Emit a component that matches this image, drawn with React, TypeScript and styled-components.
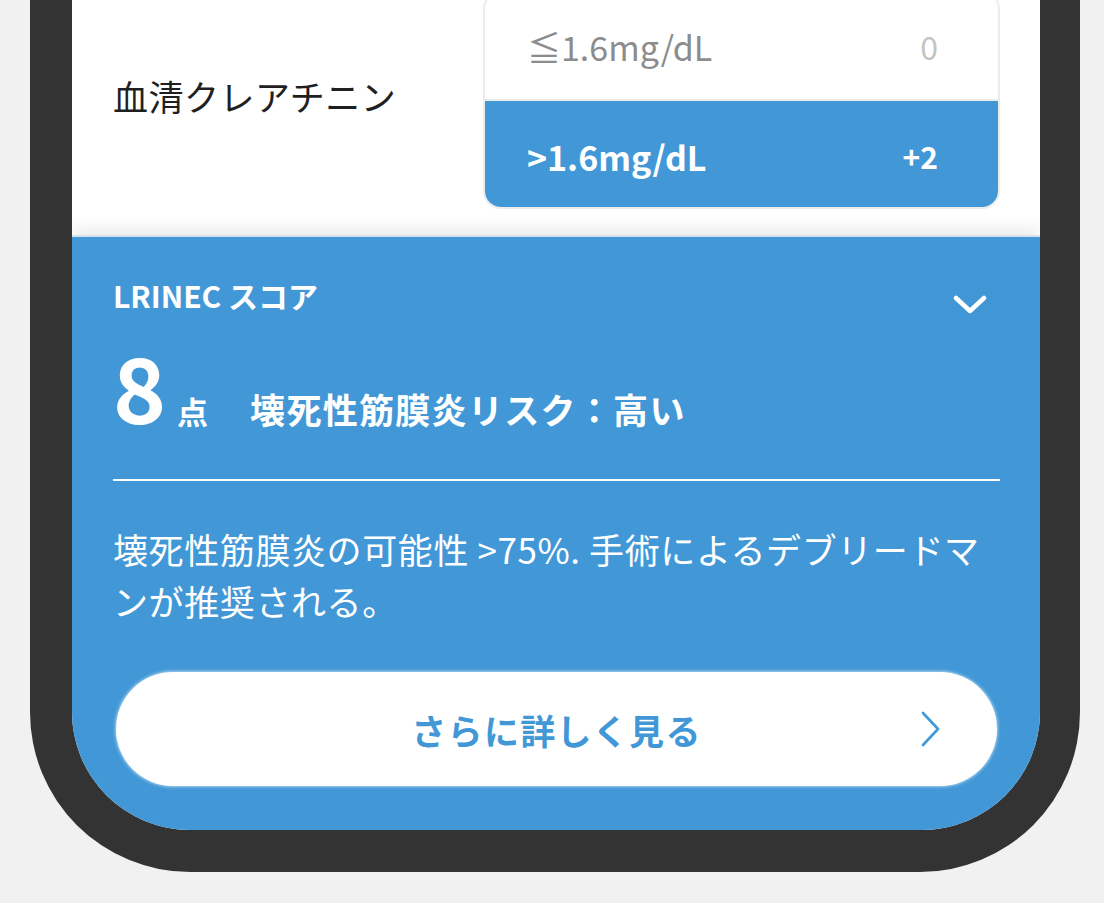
import styled, { createGlobalStyle } from "styled-components";

// ── GLOBAL ─────────────────────────────────

const GlobalStyle = createGlobalStyle`
  html, body {
    margin: 0;
    padding: 0;
    background: #f1f1f1;
    overflow: hidden;
  }
  body {
    font-family: "Noto Sans CJK JP", "Noto Sans", sans-serif;
  }
`;

const BLUE = "#4298d7";

// ── FRAME ──────────────────────────────────

const Page = styled.div`
  width: 1104px;
  height: 903px;
  padding-left: 30px;
  box-sizing: border-box;
`;

const PhoneFrame = styled.div`
  width: 1050px;
  margin-top: -24px;
  padding: 0 40px 42px 42px;
  box-sizing: border-box;
  background: #333333;
  border-radius: 0 0 160px 160px;
`;

const Screen = styled.div`
  background: #ffffff;
  border-radius: 0 0 118px 118px;
  overflow: hidden;
  display: flex;
  flex-direction: column;
`;

// ── CRITERIA ROW ───────────────────────────

const CriteriaRow = styled.div`
  display: flex;
  align-items: center;
  justify-content: space-between;
  padding: 15px 40px 26px 41px;
`;

const CriteriaLabel = styled.div`
  font-size: 35px;
  color: #1f1f1f;
  letter-spacing: 0.5px;
  padding-bottom: 10px;
`;

const OptionBox = styled.div`
  width: 517px;
  border: 2px solid #ececec;
  border-radius: 18px;
  overflow: hidden;
  box-sizing: border-box;
`;

const Option = styled.div<{ $selected?: boolean }>`
  box-sizing: border-box;
  height: ${({ $selected }) => ($selected ? "106px" : "108px")};
  display: flex;
  align-items: center;
  justify-content: space-between;
  padding: ${({ $selected }) => ($selected ? "4px 60px 0 42px" : "0 60px 0 42px")};
  font-size: 34px;
  background: ${({ $selected }) => ($selected ? BLUE : "#ffffff")};
  color: ${({ $selected }) => ($selected ? "#ffffff" : "#8c8c8c")};
  font-weight: ${({ $selected }) => ($selected ? 700 : 400)};
  border-bottom: ${({ $selected }) => ($selected ? "none" : "2px solid #ececec")};
`;

const OptionPoints = styled.span<{ $selected?: boolean }>`
  font-size: ${({ $selected }) => ($selected ? "30px" : "32px")};
  color: ${({ $selected }) => ($selected ? "#ffffff" : "#c4c4c4")};
`;

// ── RESULT PANEL ───────────────────────────

const ResultPanel = styled.div`
  background: ${BLUE};
  border-top: 2px solid #d6e2ec;
  box-shadow: 0 -8px 14px rgba(0, 0, 0, 0.07);
  padding: 38px 40px 44px 41px;
  color: #ffffff;
  display: flex;
  flex-direction: column;
`;

const PanelHeader = styled.div`
  display: flex;
  justify-content: space-between;
  align-items: flex-start;
`;

const PanelTitle = styled.div`
  font-size: 30px;
  font-weight: 700;
  line-height: 40px;
`;

const CollapseButton = styled.button`
  width: 110px;
  height: 110px;
  margin: -25px -25px -65px 0;
  border: none;
  border-radius: 30px;
  background: rgba(0, 0, 0, 0.006);
  display: flex;
  align-items: center;
  justify-content: center;
  padding: 0;
  cursor: pointer;
`;

const ScoreRow = styled.div`
  display: flex;
  align-items: baseline;
  margin-top: 20px;
  height: 104px;
`;

const ScoreValue = styled.span`
  font-size: 90px;
  font-weight: 700;
  line-height: 100px;
`;

const ScoreUnit = styled.span`
  font-size: 31px;
  font-weight: 700;
  margin-left: 11px;
`;

const RiskText = styled.span`
  font-size: 35px;
  font-weight: 700;
  margin-left: 42px;
  letter-spacing: 1.3px;
`;

const Divider = styled.hr`
  border: none;
  height: 2px;
  background: #ffffff;
  margin: 40px 0 0;
`;

const Description = styled.p`
  margin: 42px 0 0;
  font-size: 35px;
  line-height: 52px;
  letter-spacing: 0.6px;
`;

const DetailButton = styled.button`
  margin: 45px 3px 0;
  height: 114px;
  border: none;
  border-radius: 57px;
  background: #ffffff;
  box-shadow: 0 0 3px 1px rgba(255, 255, 255, 0.55);
  display: flex;
  align-items: center;
  justify-content: center;
  position: relative;
  font-family: inherit;
  font-size: 35px;
  font-weight: 700;
  color: ${BLUE};
  letter-spacing: 1.3px;
  cursor: pointer;
`;

const ButtonArrow = styled.span`
  position: absolute;
  right: 55px;
  top: 50%;
  transform: translateY(-50%);
  display: flex;
`;

// ── ICONS ──────────────────────────────────

function ChevronDown() {
  return (
    <svg width="34" height="22" viewBox="0 0 34 22" fill="none">
      <polyline
        points="3,4 17,17 31,4"
        stroke="#ffffff"
        strokeWidth="4.5"
        strokeLinecap="round"
        strokeLinejoin="round"
      />
    </svg>
  );
}

function ChevronRight() {
  return (
    <svg width="22" height="36" viewBox="0 0 22 36" fill="none">
      <polyline
        points="3,2 18,18 3,34"
        stroke={BLUE}
        strokeWidth="2.6"
        strokeLinecap="round"
        strokeLinejoin="round"
      />
    </svg>
  );
}

// ── APP ────────────────────────────────────

export default function App() {
  return (
    <>
      <GlobalStyle />
      <Page>
        <PhoneFrame>
          <Screen>
            <CriteriaRow>
              <CriteriaLabel>血清クレアチニン</CriteriaLabel>
              <OptionBox>
                <Option>
                  <span>≦1.6mg/dL</span>
                  <OptionPoints>0</OptionPoints>
                </Option>
                <Option $selected>
                  <span>&gt;1.6mg/dL</span>
                  <OptionPoints $selected>+2</OptionPoints>
                </Option>
              </OptionBox>
            </CriteriaRow>

            <ResultPanel>
              <PanelHeader>
                <PanelTitle>LRINEC スコア</PanelTitle>
                <CollapseButton aria-label="閉じる">
                  <ChevronDown />
                </CollapseButton>
              </PanelHeader>

              <ScoreRow>
                <ScoreValue>8</ScoreValue>
                <ScoreUnit>点</ScoreUnit>
                <RiskText>壊死性筋膜炎リスク：高い</RiskText>
              </ScoreRow>

              <Divider />

              <Description>
                壊死性筋膜炎の可能性 &gt;75%. 手術によるデブリードマンが推奨される。
              </Description>

              <DetailButton>
                さらに詳しく見る
                <ButtonArrow>
                  <ChevronRight />
                </ButtonArrow>
              </DetailButton>
            </ResultPanel>
          </Screen>
        </PhoneFrame>
      </Page>
    </>
  );
}
